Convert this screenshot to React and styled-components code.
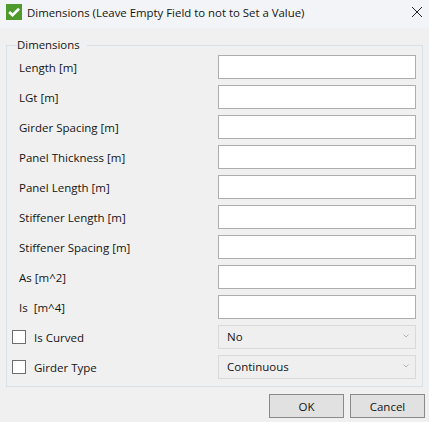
import React from "react";
import styled, { createGlobalStyle } from "styled-components";

const GlobalStyle = createGlobalStyle`
  html, body {
    margin: 0;
    padding: 0;
    background: #f0f0f0;
  }
  * {
    box-sizing: border-box;
  }
`;

const Window = styled.div`
  width: 429px;
  height: 422px;
  display: flex;
  flex-direction: column;
  background: #f0f0f0;
  color: #141414;
  font-family: "Open Sans", "Noto Sans", sans-serif;
  font-size: 11.5px;
  overflow: hidden;
`;

const TitleBar = styled.div`
  height: 28px;
  flex: none;
  display: flex;
  align-items: center;
  padding: 0 7px 4px 6px;
  background: #f3f4f8;
`;

const TitleText = styled.span`
  flex: 1;
  margin-left: 5px;
  font-size: 11.4px;
`;

const GroupBox = styled.fieldset`
  margin: 9px 6px 0 6px;
  padding: 2px 0 0 0;
  height: 350px;
  border: 1px solid #d9e1e8;
  border-radius: 0;
`;

const GroupLegend = styled.legend`
  margin-left: 10px;
  padding: 0 7px 0 0;
  font-size: 11.4px;
  line-height: 16px;
`;

const Fields = styled.div`
  display: flex;
  flex-direction: column;
  gap: 6px;
`;

const Row = styled.div`
  height: 24px;
  display: flex;
  align-items: center;
  padding: 0 6px 0 5px;
`;

const CheckBox = styled.span`
  width: 14px;
  height: 14px;
  flex: none;
  margin-right: 8px;
  background: #ffffff;
  border: 1px solid #6e6e6e;
`;

const Label = styled.span`
  flex: none;
  width: ${(props) => (props.$checked ? "184px" : "206px")};
  padding-left: ${(props) => (props.$checked ? "0" : "7px")};
  white-space: pre;
`;

const Field = styled.div`
  width: 198px;
  height: 24px;
  background: #ffffff;
  border: 1px solid #adadad;
`;

const Select = styled.div`
  width: 198px;
  height: 24px;
  display: flex;
  align-items: center;
  justify-content: space-between;
  padding: 0 6px 2px 8px;
  background: #efefef;
  border: 1px solid #d9d9d9;
`;

const Footer = styled.div`
  display: flex;
  justify-content: flex-end;
  gap: 6px;
  padding: 7px 4px 0 0;
`;

const Button = styled.button`
  width: 75px;
  height: 24px;
  padding: 0;
  font-family: inherit;
  font-size: 11.5px;
  color: #141414;
  background: #e1e1e1;
  border: 1px solid #8a8a8a;
`;

const AppIcon = () => (
  <svg width="16" height="16" viewBox="0 0 16 16">
    <rect width="16" height="16" fill="#4e9a2d" />
    <path d="M3.2 8 L6.5 11.2 L13 4.8" fill="none" stroke="#ffffff" strokeWidth="2.6" />
  </svg>
);

const CloseIcon = () => (
  <svg width="10" height="10" viewBox="0 0 10 10">
    <path d="M0 0 L10 10 M10 0 L0 10" stroke="#222222" strokeWidth="1" />
  </svg>
);

const Chevron = () => (
  <svg width="6" height="4" viewBox="0 0 6 4">
    <path d="M0.5 0.5 L3 3 L5.5 0.5" fill="none" stroke="#b4b4b4" strokeWidth="1" />
  </svg>
);

const textFields = [
  "Length [m]",
  "LGt [m]",
  "Girder Spacing [m]",
  "Panel Thickness [m]",
  "Panel Length [m]",
  "Stiffener Length [m]",
  "Stiffener Spacing [m]",
  "As [m^2]",
  "Is  [m^4]",
];

const selectFields = [
  { label: "Is Curved", value: "No" },
  { label: "Girder Type", value: "Continuous" },
];

const App = () => (
  <Window>
    <GlobalStyle />
    <TitleBar>
      <AppIcon />
      <TitleText>Dimensions (Leave Empty Field to not to Set a Value)</TitleText>
      <CloseIcon />
    </TitleBar>
    <GroupBox>
      <GroupLegend>Dimensions</GroupLegend>
      <Fields>
        {textFields.map((label) => (
          <Row key={label}>
            <Label>{label}</Label>
            <Field />
          </Row>
        ))}
        {selectFields.map((item) => (
          <Row key={item.label}>
            <CheckBox />
            <Label $checked>{item.label}</Label>
            <Select>
              {item.value}
              <Chevron />
            </Select>
          </Row>
        ))}
      </Fields>
    </GroupBox>
    <Footer>
      <Button>OK</Button>
      <Button>Cancel</Button>
    </Footer>
  </Window>
);

export default App;
